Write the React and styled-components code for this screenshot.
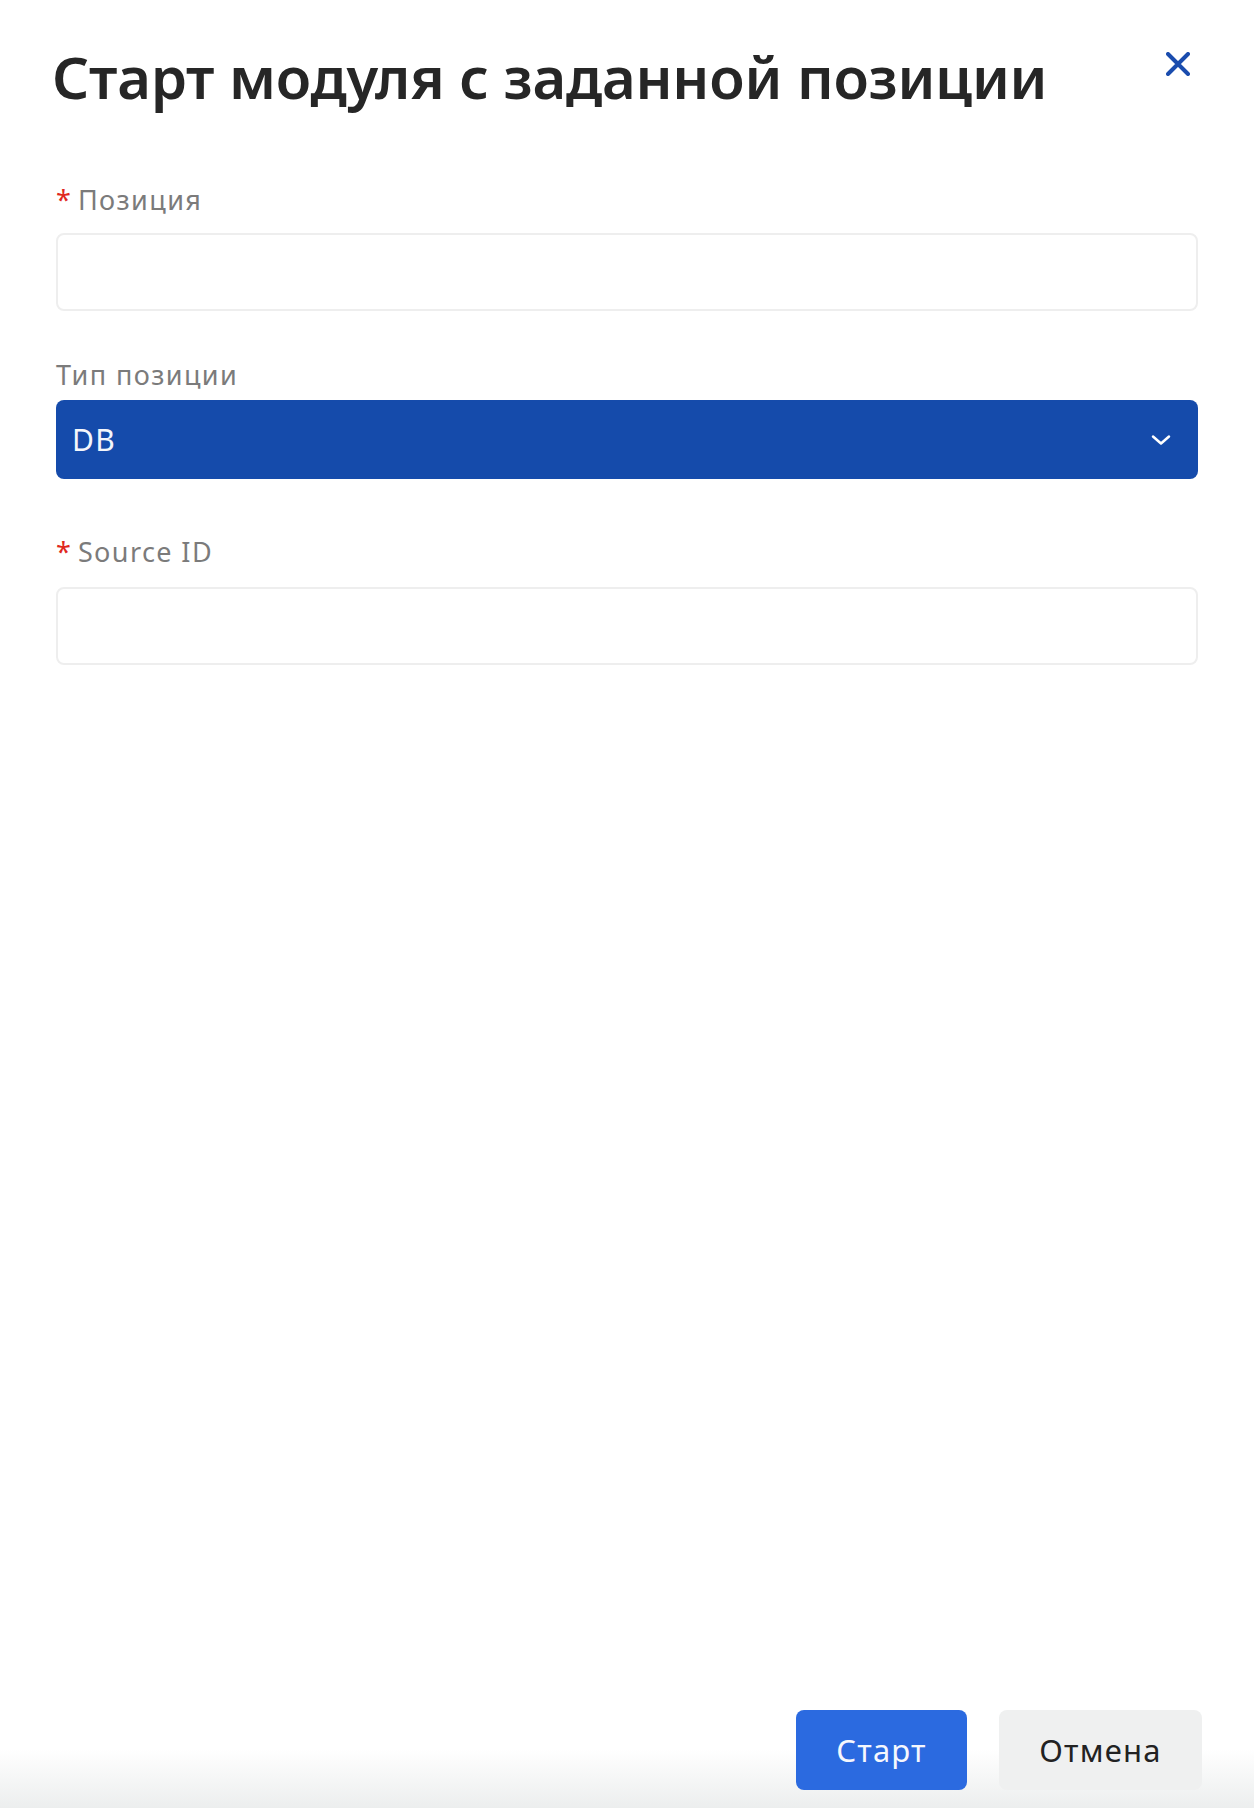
import React, { useState } from 'react';
import styled, { createGlobalStyle } from 'styled-components';

const GlobalStyle = createGlobalStyle`
  html, body {
    margin: 0;
    padding: 0;
    background: #ffffff;
  }
  body {
    font-family: "Noto Sans", "Open Sans", sans-serif;
  }
  * {
    box-sizing: border-box;
  }
`;

const Page = styled.div`
  display: flex;
  flex-direction: column;
  min-height: 1808px;
  background: #ffffff;
`;

const Header = styled.div`
  display: flex;
  justify-content: space-between;
  align-items: flex-start;
  padding: 42px 64px 0 52px;
`;

const Title = styled.h1`
  margin: 0;
  font-family: "Noto Sans", sans-serif;
  font-size: 58px;
  line-height: 70px;
  font-weight: 600;
  color: #262626;
  letter-spacing: -0.25px;
`;

const CloseButton = styled.button`
  display: flex;
  align-items: center;
  justify-content: center;
  width: 24px;
  height: 24px;
  margin-top: 10px;
  padding: 0;
  border: none;
  background: transparent;
  cursor: pointer;
`;

const Form = styled.form`
  display: flex;
  flex-direction: column;
  padding: 0 56px;
`;

const Label = styled.label`
  display: block;
  margin-top: ${(p) => p.$top}px;
  margin-bottom: ${(p) => p.$bottom}px;
  font-size: 27px;
  line-height: 32px;
  letter-spacing: 1.4px;
  color: #7b7b7b;
`;

const Star = styled.span`
  color: #e0281e;
  margin-right: 7px;
  letter-spacing: 0;
`;

const Input = styled.input`
  display: block;
  width: 100%;
  height: 78px;
  padding: 0 18px;
  border: 2px solid #eeeeee;
  border-radius: 8px;
  font-family: "Noto Sans", sans-serif;
  font-size: 26px;
  color: #262626;
  outline: none;
  background: #ffffff;
`;

const Select = styled.div`
  display: flex;
  align-items: center;
  justify-content: space-between;
  height: 79px;
  padding: 0 27px 0 16px;
  border-radius: 8px;
  background: #154bab;
  color: #f4f6fb;
  font-size: 30px;
  letter-spacing: 1.4px;
  cursor: pointer;
`;

const Spacer = styled.div`
  flex: 1;
`;

const Footer = styled.div`
  display: flex;
  justify-content: flex-end;
  gap: 32px;
  padding: 0 52px 18px 0;
  background: linear-gradient(to bottom, #ffffff 0%, #ffffff 40%, #eceeee 100%);
`;

const Button = styled.button`
  height: 80px;
  width: ${(p) => p.$width}px;
  border: none;
  border-radius: 8px;
  font-family: "Noto Sans", sans-serif;
  font-size: 31px;
  letter-spacing: 1.2px;
  cursor: pointer;
  background: ${(p) => (p.$primary ? '#2b6ae0' : '#eff0f0')};
  color: ${(p) => (p.$primary ? '#f5f7fd' : '#222222')};
`;

const CloseIcon = () => (
  <svg width="24" height="24" viewBox="0 0 24 24">
    <path d="M2 2 L22 22 M22 2 L2 22" stroke="#1a4cae" strokeWidth="4" strokeLinecap="round" />
  </svg>
);

const Chevron = () => (
  <svg width="20" height="12" viewBox="0 0 20 12">
    <path d="M2 2.5 L10 9.5 L18 2.5" stroke="#ffffff" strokeWidth="2.5" fill="none" strokeLinecap="round" strokeLinejoin="round" />
  </svg>
);

const App = () => {
  const [position, setPosition] = useState('');
  const [sourceId, setSourceId] = useState('');

  return (
    <Page>
      <GlobalStyle />
      <Header>
        <Title>Старт модуля с заданной позиции</Title>
        <CloseButton aria-label="close">
          <CloseIcon />
        </CloseButton>
      </Header>
      <Form onSubmit={(e) => e.preventDefault()}>
        <Label $top={72} $bottom={17}>
          <Star>*</Star>Позиция
        </Label>
        <Input value={position} onChange={(e) => setPosition(e.target.value)} />
        <Label $top={48} $bottom={9}>Тип позиции</Label>
        <Select>
          <span>DB</span>
          <Chevron />
        </Select>
        <Label $top={57} $bottom={19}>
          <Star>*</Star>Source ID
        </Label>
        <Input value={sourceId} onChange={(e) => setSourceId(e.target.value)} />
      </Form>
      <Spacer />
      <Footer>
        <Button $primary $width={171}>Старт</Button>
        <Button $width={203}>Отмена</Button>
      </Footer>
    </Page>
  );
};

export default App;
